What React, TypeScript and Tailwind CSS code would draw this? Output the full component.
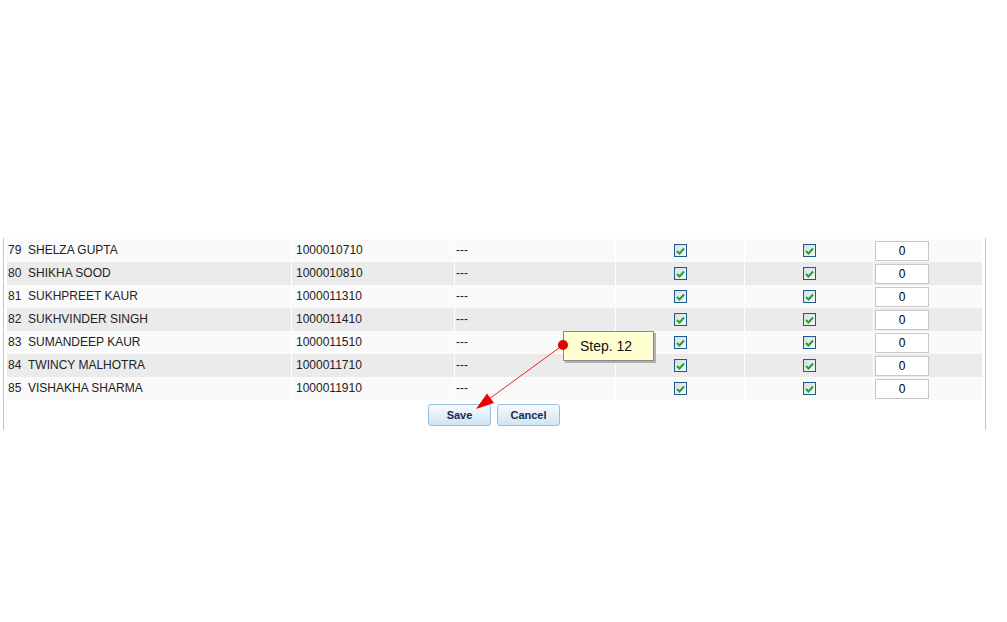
const rows = [
  { no: 79, name: "SHELZA GUPTA", roll: "1000010710" },
  { no: 80, name: "SHIKHA SOOD", roll: "1000010810" },
  { no: 81, name: "SUKHPREET KAUR", roll: "1000011310" },
  { no: 82, name: "SUKHVINDER SINGH", roll: "1000011410" },
  { no: 83, name: "SUMANDEEP KAUR", roll: "1000011510" },
  { no: 84, name: "TWINCY MALHOTRA", roll: "1000011710" },
  { no: 85, name: "VISHAKHA SHARMA", roll: "1000011910" },
];

function Check() {
  return (
    <span className="flex h-[13px] w-[13px] items-center justify-center border border-[#1f5a8c] bg-gradient-to-br from-[#d6dde6] to-[#f7f9fb]">
      <svg width="9" height="8" viewBox="0 0 9 8">
        <path d="M1 4 L3.5 6.5 L8 1.5" fill="none" stroke="#22a32a" strokeWidth="2" />
      </svg>
    </span>
  );
}

export default function App() {
  return (
    <div className="relative h-[622px] w-[1007px] bg-white pt-[238px] text-[12px] text-[#222]" style={{ fontFamily: '"Liberation Sans", Arial, sans-serif' }}>
      <div className="ml-[3px] w-[983px] border-x border-[#c4c4c4] pb-[4px] pl-[3px] pt-[1px]">
        <div className="w-[975px]">
          {rows.map((r, i) => (
            <div key={r.no} className={`flex h-[23px] items-center ${i % 2 === 0 ? "bg-[#fafafa]" : "bg-[#ebebeb]"}`}>
              <div className="flex h-full w-[285px] items-center border-r border-white pb-[1px] pl-[1px]">
                <span className="w-[20px]">{r.no}</span>
                <span>{r.name}</span>
              </div>
              <div className="flex h-full w-[163px] items-center border-r border-white pb-[1px] pl-[4px]">{r.roll}</div>
              <div className="flex h-full w-[161px] items-center border-r border-white pb-[1px] pl-[1px]">---</div>
              <div className="flex h-full w-[129px] items-center justify-center border-r border-white">
                <Check />
              </div>
              <div className="flex h-full w-[129px] items-center justify-center border-r border-white">
                <Check />
              </div>
              <div className="flex h-full flex-1 items-center pl-[1px]">
                <div className="flex h-[20px] w-[54px] items-center justify-center border border-[#c8c8c8] bg-white text-[12px] text-black">0</div>
              </div>
            </div>
          ))}
          <div className="mt-[4px] flex justify-center gap-[6px] pr-[1px]">
            <button className="h-[22px] w-[63px] rounded-[3px] border border-[#98bdd8] bg-gradient-to-b from-[#f6fbff] to-[#cfe4f4] text-[11px] font-bold text-[#1b2a48]">Save</button>
            <button className="h-[22px] w-[63px] rounded-[3px] border border-[#98bdd8] bg-gradient-to-b from-[#f6fbff] to-[#cfe4f4] text-[11px] font-bold text-[#1b2a48]">Cancel</button>
          </div>
        </div>
      </div>

      <svg className="pointer-events-none absolute left-0 top-0" width="1007" height="622">
        <line x1="563" y1="345" x2="489" y2="399" stroke="#ee2222" strokeWidth="1" />
        <polygon points="476,409 494,403 487,393.5" fill="#ee0000" />
      </svg>
      <div className="absolute left-[563px] top-[331px] flex h-[30px] w-[91px] items-center border border-[#8a8a8a] bg-[#ffffd2] pl-[16px] text-[14px] text-[#111] shadow-[2px_2px_0_#b0b0b0]">
        Step. 12
      </div>
      <div className="absolute left-[558px] top-[340px] h-[10px] w-[10px] rounded-full bg-[#e00000]" />
    </div>
  );
}
